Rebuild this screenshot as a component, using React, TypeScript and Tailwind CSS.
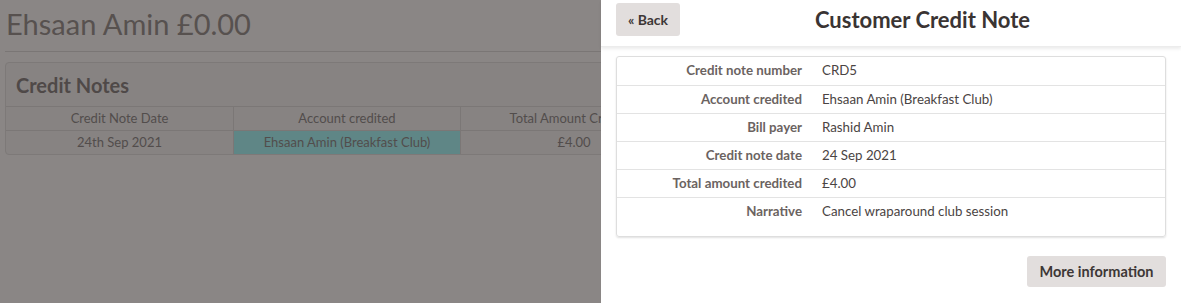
import { ReactNode } from 'react'

type Row = {
  label: string
  value: string
}

const rows: Row[] = [
  { label: 'Credit note number', value: 'CRD5' },
  { label: 'Account credited', value: 'Ehsaan Amin (Breakfast Club)' },
  { label: 'Bill payer', value: 'Rashid Amin' },
  { label: 'Credit note date', value: '24 Sep 2021' },
  { label: 'Total amount credited', value: '£4.00' },
  { label: 'Narrative', value: 'Cancel wraparound club session' },
]

function Cell({ children, className = '' }: { children: ReactNode; className?: string }) {
  return (
    <div className={`h-[23px] flex items-center justify-center border-r border-[#7b7776] ${className}`}>
      {children}
    </div>
  )
}

export default function App() {
  return (
    <div className="relative h-screen overflow-hidden bg-[#8a8685] font-['Lato',sans-serif] text-[#524d4c]">
      {/* page behind the overlay */}
      <div className="px-[5px] pt-[6px]">
        <h1 className="text-[29px] font-normal leading-[36px] pl-px text-[#57514f]">Ehsaan Amin £0.00</h1>
        <div className="mt-[9px] border-t border-[#7a7675]" />
        <div className="mt-[10px] w-[760px] rounded-sm border border-[#7d7978] bg-[#878382]">
          <div className="h-[43px] flex items-center px-[10px] text-[20px] font-bold text-[#4f4948]">Credit Notes</div>
          <div className="grid grid-cols-[228px_227px_227px] text-[13px] border-t border-[#7b7776]">
            <Cell>Credit Note Date</Cell>
            <Cell>Account credited</Cell>
            <Cell>Total Amount Credited</Cell>
          </div>
          <div className="grid grid-cols-[228px_227px_227px] text-[13px] border-t border-[#7b7776]">
            <Cell>24th Sep 2021</Cell>
            <Cell className="bg-[#5f8686]">Ehsaan Amin (Breakfast Club)</Cell>
            <Cell>£4.00</Cell>
          </div>
        </div>
      </div>

      {/* slide-over panel */}
      <div className="absolute top-0 right-0 bottom-0 w-[580px] bg-white">
        <div className="h-[47px] flex items-center pl-[15px] pr-4 shadow-[0_2px_3px_rgba(0,0,0,0.08)] border-b border-[#ececec]">
          <button className="h-[33px] w-[64px] -mt-[8px] rounded-[3px] bg-[#e2dedd] text-[14px] font-bold text-[#3d3736]">
            « Back
          </button>
          <h2 className="flex-1 text-center text-[22px] font-bold text-[#3a3433] -mt-[8px]">Customer Credit Note</h2>
        </div>
        <div className="mt-[9px] mx-[15px] rounded-[3px] border border-[#dedede] shadow-[0_1px_2px_rgba(0,0,0,0.12)] pb-[11px]">
          {rows.map((r, i) => (
            <div
              key={r.label}
              className={`grid grid-cols-[195px_1fr] h-[28px] items-center text-[13.3px] ${i > 0 ? 'border-t border-[#e3e3e3]' : ''}`}
            >
              <div className="text-right pr-[10px] font-bold text-[#6b6361]">{r.label}</div>
              <div className="pl-[10px] text-[#4a4443]">{r.value}</div>
            </div>
          ))}
        </div>
        <div className="flex justify-end pr-[15px] mt-[19px]">
          <button className="h-[31px] w-[139px] rounded-[3px] bg-[#e2dedd] text-[14.5px] font-bold text-[#3d3736]">
            More information
          </button>
        </div>
      </div>
    </div>
  )
}
